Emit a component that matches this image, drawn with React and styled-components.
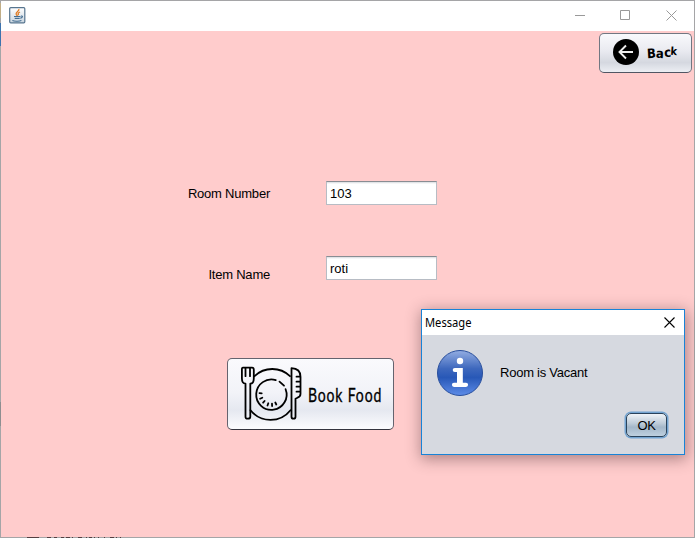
import React from 'react';
import styled, { createGlobalStyle } from 'styled-components';

const GlobalStyle = createGlobalStyle`
  * { box-sizing: border-box; }
  body { margin: 0; overflow: hidden; }
`;

const Window = styled.main`
  position: relative;
  display: flex;
  flex-direction: column;
  width: 695px;
  height: 538px;
  border: 1px solid #a5a5a7;
  background: #ffcccc;
  color: #000;
  font: 13px/16px "Liberation Sans", Arial, sans-serif;
`;

const EdgeStrip = styled.i`
  position: absolute;
  left: -1px;
  top: ${({ $top }) => $top}px;
  width: 1px;
  height: ${({ $height }) => $height}px;
  background: ${({ $color }) => $color};
`;

const TitleBar = styled.header`
  display: flex;
  align-items: center;
  justify-content: space-between;
  height: 30px;
  padding: 0 17px 2px 8px;
  background: #fff;
  svg { display: block; }
`;

const WindowControls = styled.div`
  display: grid;
  grid-template-columns: 45px 46px 11px;
`;

const Toolbar = styled.div`
  display: flex;
  justify-content: flex-end;
  padding: 2px 2px 0;
`;

const NimbusButton = styled.button`
  display: flex;
  align-items: center;
  flex: none;
  padding: 0;
  border: 1px solid #717782;
  border-bottom-color: #505663;
  border-radius: 5px;
  color: #000;
  background: linear-gradient(#f9f9fc, #e9eaf0 45%, #d5d8e0 75%, #eceef3);
`;

const BackButton = styled(NimbusButton)`
  width: 93px;
  height: 40px;
  padding: 0 0 2px 13px;
  gap: 8px;
`;

const BackText = styled.span`
  display: flex;
  width: 34px;
  margin-top: 2px;
  font: bold 13px/16px "DejaVu Sans", sans-serif;
  transform: scaleX(.9);
  transform-origin: left center;
`;

const Letter = styled.span`
  font-size: ${({ $size }) => $size}px;
  transform: rotate(${({ $turn }) => $turn}deg) translateY(${({ $shift }) => $shift}px);
`;

const Form = styled.form`
  display: flex;
  flex-direction: column;
  padding-top: 108px;
`;

const Field = styled.label`
  display: flex;
  align-items: center;
  height: 24px;
  margin-bottom: 51px;
`;

const FieldName = styled.span`
  width: 269px;
  margin: ${({ $drop }) => $drop}px 56px 0 0;
  text-align: right;
  letter-spacing: -.22px;
`;

const Input = styled.input`
  width: 111px;
  height: 24px;
  padding: 1px 3px 0;
  border: 1px solid #b7bcc4;
  border-top: 1px solid #898d93;
  background: linear-gradient(#d9dbdf, #fff 2px);
  color: #000;
  font: inherit;
  outline: none;
`;

const FoodButton = styled(NimbusButton)`
  width: 167px;
  height: 72px;
  margin: 27px 0 0 226px;
  padding-left: 13px;
  border-color: #65636e;
  border-bottom-color: #34343e;
  background: linear-gradient(#fafafd, #f2f3f8 48%, #e5e8f0 73%, #fcfcfe);
`;

const FoodText = styled.span`
  width: 76px;
  margin: -1px 0 0 6px;
  font: 20px/24px Lato, sans-serif;
  -webkit-text-stroke: .35px #000;
  letter-spacing: 1.2px;
  white-space: nowrap;
  transform: scaleX(.7);
  transform-origin: left center;
`;

const Dialog = styled.section`
  position: absolute;
  left: 420px;
  top: 308px;
  width: 264px;
  height: 146px;
  border: 1px solid #1883d7;
  background: #d6d9e0;
  box-shadow: 1px 3px 14px 1px rgba(60, 35, 40, .43);
`;

const DialogHeader = styled.header`
  display: flex;
  justify-content: space-between;
  align-items: center;
  height: 25px;
  padding: 0 9px 0 3px;
  background: #fff;
  font: 12px/16px "Noto Sans", sans-serif;
`;

const DialogTitle = styled.span`
  transform: scaleX(.93);
  transform-origin: left center;
`;

const DialogBody = styled.div`
  display: flex;
  align-items: center;
  height: 48px;
  margin: 14px 0 0 14px;
  gap: 16px;
  letter-spacing: -.24px;
`;

const DialogFooter = styled.footer`
  display: flex;
  justify-content: flex-end;
  padding: 16px 17px;
`;

const OkButton = styled(NimbusButton)`
  justify-content: center;
  width: 41px;
  height: 24px;
  padding-top: 1px;
  border-color: #29435c;
  background: linear-gradient(#f0f4f8, #bdcbd8 43%, #a3b7c9 60%, #bed0df);
  box-shadow: 0 0 0 1.5px #73a4d1;
  font: inherit;
  letter-spacing: -.5px;
`;

const ClippedMarks = styled.div`
  position: absolute;
  display: flex;
  left: 26px;
  bottom: -1px;
`;

const Dash = styled.i`
  width: ${({ $width }) => $width}px;
  height: 1px;
  margin-right: ${({ $space }) => $space}px;
  background: #533f42;
`;

const dashes = [[12, 8], [4, 3], [3, 4], [3, 2], [4, 2], [1, 5], [4, 4], [1, 2], [3, 2], [1, 3], [1, 5], [1, 5], [4, 2], [1, 3], [1, 0]];

const JavaIcon = () => (
  <svg width="17" height="17" viewBox="0 0 17 17" fill="none">
    <defs><linearGradient id="java" x2="0" y2="1"><stop stopColor="#fff" /><stop offset="1" stopColor="#c9d5df" /></linearGradient></defs>
    <rect x=".7" y=".7" width="15.1" height="15.1" rx="1" fill="url(#java)" stroke="#57758f" strokeWidth="1.2" />
    <path d="M9.8 2C11 4 6 5 7.2 7.3L8.5 9M11 5C8.8 6 8.7 6.8 9.7 8" stroke="#e07920" strokeWidth="1.3" />
    <path d="M5 9.5h6.5M5.7 11.4h5M12 9c2.5-.5 1.5 1.8-.8 2.3M3.4 13.6c2 .9 7.5.8 9-.2" stroke="#456e92" strokeWidth="1.1" />
  </svg>
);

const PlateIcon = () => (
  <svg width="61" height="56" viewBox="0.5 -0.7 61 56" fill="none" stroke="#000" strokeWidth="1.8" strokeLinecap="round" strokeLinejoin="round">
    <path d="M14 9.5A25.5 25.5 0 0 1 49.5 9.5M10 43.5A25.5 25.5 0 0 0 50 43.5" />
    <path d="M35.3 13.4A15.2 15.2 0 1 0 45.1 22.5M39 15L43.5 19" />
    <path d="M19 26.5l2.2.2M19.6 32l2.2-1M22.6 36l1.5-1.7M27 38.8l.8-2.2M31.6 39.3l-.1-2.4M35.8 37.8l-1-2" />
    <path d="M1.4 2.5Q1.4 1 2.5 1h9Q13.3 1 13.3 3v8.5Q13.3 17 9.8 17v33Q9.8 52 7.3 52T5 50V17Q1.4 17 1.4 11.5zM5 1v8.5M9.5 1v8.5" />
    <path d="M51 1.5Q60 2 60 10v17q0 3-3 4l-2 1v18q0 2-2 2t-2-2zM56 10h4M56 15h4M56 20h4M56 25h4" />
  </svg>
);

const InfoIcon = () => (
  <svg width="48" height="48" viewBox="0 0 48 48">
    <defs><linearGradient id="info" x2="0" y2="1"><stop stopColor="#93ade2" /><stop offset=".4" stopColor="#3e68bd" /><stop offset=".6" stopColor="#2858b7" /><stop offset="1" stopColor="#5d8ce8" /></linearGradient></defs>
    <circle cx="24" cy="24" r="22.5" fill="url(#info)" stroke="#294f9d" />
    <circle cx="24" cy="12" r="3.2" fill="#fff" />
    <path d="M18.8 21H24v14.8M18 35.8h12" fill="none" stroke="#fff" strokeWidth="4.2" strokeLinecap="round" strokeLinejoin="round" />
    <path d="M22 19h4.8v17H21V23h1z" fill="#fff" />
  </svg>
);

export default function App() {
  return (
    <>
      <GlobalStyle />
      <Window>
        <TitleBar>
          <JavaIcon />
          <WindowControls>
            <svg width="11" height="12" viewBox="0 0 11 12"><path d="M0 6.5h10" stroke="#999" /></svg>
            <svg width="11" height="12" viewBox="0 0 11 12"><path d="M.5 1.5h9v9h-9z" fill="none" stroke="#999" /></svg>
            <svg width="11" height="12" viewBox="0 0 11 12"><path d="M.5 1.5l10 10M10.5 1.5l-10 10" stroke="#999" /></svg>
          </WindowControls>
        </TitleBar>
        <Toolbar>
          <BackButton type="button">
            <svg width="26" height="26" viewBox="0 0 26 26"><circle cx="13" cy="13" r="13" /><path d="M13 6.5L6.5 13l6.5 6.5M7 13h13" fill="none" stroke="#eee" strokeWidth="1.9" /></svg>
            <BackText><Letter $size={13} $turn={-4} $shift={1}>B</Letter><Letter $size={13} $turn={3} $shift={1}>a</Letter><Letter $size={13} $turn={-5} $shift={0}>c</Letter><Letter $size={11} $turn={4} $shift={-1}>k</Letter></BackText>
          </BackButton>
        </Toolbar>
        <Form>
          <Field><FieldName $drop={2}>Room Number</FieldName><Input defaultValue="103" /></Field>
          <Field><FieldName $drop={13}>Item Name</FieldName><Input defaultValue="roti" /></Field>
          <FoodButton type="button"><PlateIcon /><FoodText>Book Food</FoodText></FoodButton>
        </Form>
        <EdgeStrip $top={2} $height={15} $color="#c2ae86" />
        <EdgeStrip $top={22} $height={23} $color="#3d73ae" />
        <EdgeStrip $top={401} $height={24} $color="#8e8e90" />
        <ClippedMarks>
          {dashes.map(([width, space], i) => <Dash key={i} $width={width} $space={space} />)}
        </ClippedMarks>
        <Dialog>
          <DialogHeader>
            <DialogTitle>Message</DialogTitle>
            <svg width="11" height="11" viewBox="0 0 11 11"><path d="M.5.5l10 10M10.5.5l-10 10" stroke="#000" strokeWidth="1.1" /></svg>
          </DialogHeader>
          <DialogBody><InfoIcon /><span>Room is Vacant</span></DialogBody>
          <DialogFooter><OkButton type="button">OK</OkButton></DialogFooter>
        </Dialog>
      </Window>
    </>
  );
}
